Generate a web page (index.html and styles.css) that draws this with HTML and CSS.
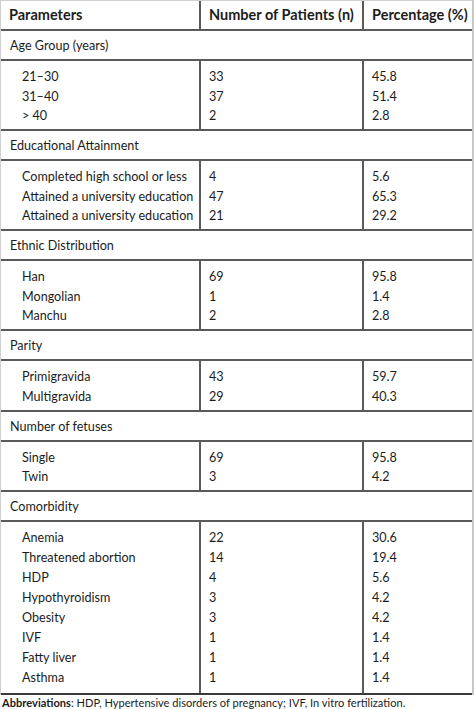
FILE: index.html
```html
<!DOCTYPE html>
<html>
<head>
<meta charset="utf-8">
<link rel="stylesheet" href="styles.css">
</head>
<body>
<div class="frame">
<table class="tbl">
  <colgroup><col class="c1"><col class="c2"><col class="c3"></colgroup>
  <thead>
    <tr><th>Parameters</th><th>Number of Patients (n)</th><th>Percentage (%)</th></tr>
  </thead>
  <tbody>
    <tr class="sec"><td colspan="3">Age Group (years)</td></tr>
    <tr class="first"><td class="lbl">21–30</td><td>33</td><td>45.8</td></tr>
    <tr><td class="lbl">31–40</td><td>37</td><td>51.4</td></tr>
    <tr class="last"><td class="lbl">&gt; 40</td><td>2</td><td>2.8</td></tr>
  </tbody>
  <tbody>
    <tr class="sec"><td colspan="3">Educational Attainment</td></tr>
    <tr class="first"><td class="lbl">Completed high school or less</td><td>4</td><td>5.6</td></tr>
    <tr><td class="lbl">Attained a university education</td><td>47</td><td>65.3</td></tr>
    <tr class="last"><td class="lbl">Attained a university education</td><td>21</td><td>29.2</td></tr>
  </tbody>
  <tbody>
    <tr class="sec"><td colspan="3">Ethnic Distribution</td></tr>
    <tr class="first"><td class="lbl">Han</td><td>69</td><td>95.8</td></tr>
    <tr><td class="lbl">Mongolian</td><td>1</td><td>1.4</td></tr>
    <tr class="last"><td class="lbl">Manchu</td><td>2</td><td>2.8</td></tr>
  </tbody>
  <tbody>
    <tr class="sec"><td colspan="3">Parity</td></tr>
    <tr class="first"><td class="lbl">Primigravida</td><td>43</td><td>59.7</td></tr>
    <tr class="last"><td class="lbl">Multigravida</td><td>29</td><td>40.3</td></tr>
  </tbody>
  <tbody>
    <tr class="sec"><td colspan="3">Number of fetuses</td></tr>
    <tr class="first"><td class="lbl">Single</td><td>69</td><td>95.8</td></tr>
    <tr class="last"><td class="lbl">Twin</td><td>3</td><td>4.2</td></tr>
  </tbody>
  <tbody class="loose">
    <tr class="sec"><td colspan="3">Comorbidity</td></tr>
    <tr class="first"><td class="lbl">Anemia</td><td>22</td><td>30.6</td></tr>
    <tr><td class="lbl">Threatened abortion</td><td>14</td><td>19.4</td></tr>
    <tr><td class="lbl">HDP</td><td>4</td><td>5.6</td></tr>
    <tr><td class="lbl">Hypothyroidism</td><td>3</td><td>4.2</td></tr>
    <tr><td class="lbl">Obesity</td><td>3</td><td>4.2</td></tr>
    <tr><td class="lbl">IVF</td><td>1</td><td>1.4</td></tr>
    <tr><td class="lbl">Fatty liver</td><td>1</td><td>1.4</td></tr>
    <tr class="last end"><td class="lbl">Asthma</td><td>1</td><td>1.4</td></tr>
  </tbody>
</table>
</div>
<p class="note"><b>Abbreviations</b>: HDP, Hypertensive disorders of pregnancy; IVF, In vitro fertilization.</p>
</body>
</html>
```
FILE: styles.css
```css
html, body {
  margin: 0;
  padding: 0;
  background: #fff;
}
body {
  width: 474px;
  height: 709px;
  overflow: hidden;
  font-family: "Lato", "Open Sans", sans-serif;
  color: #1c1c1c;
}
.frame {
  border-top: 1px solid #cfcfcf;
  border-left: 1px solid #cfcfcf;
  border-right: 2px solid #c8c8c8;
  width: 471px;
}
.tbl {
  width: 100%;
  border-collapse: collapse;
  table-layout: fixed;
  font-size: 12.6px;
}
.c1 { width: 199px; }
.c2 { width: 163px; }
.c3 { width: auto; }
.tbl th {
  text-align: left;
  font-weight: 700;
  font-size: 14.5px;
  line-height: 20px;
  padding: 4px 4px 4px 8px;
  white-space: nowrap;
  border-bottom: 2px solid #5a5a5a;
}
.tbl th + th {
  border-left: 2px solid #5a5a5a;
}
.tbl td {
  padding: 0 4px 0 8px;
  line-height: 19.5px;
  white-space: nowrap;
  vertical-align: middle;
}
.tbl td + td {
  border-left: 2px solid #5a5a5a;
}
.tbl td.lbl {
  padding-left: 21px;
}
.sec td {
  padding: 5px 4px 3.5px 9px;
  border-bottom: 2px solid #5a5a5a;
}
.first td { padding-top: 6px; }
.last td {
  padding-bottom: 3.5px;
  border-bottom: 2px solid #5a5a5a;
}
.loose tr:not(.sec) td {
  line-height: 20px;
}
.end td {
  padding-bottom: 5px;
  border-bottom: 2px solid #3a3a3a;
}
.note {
  margin: 1px 0 0 2px;
  font-size: 11.1px;
  line-height: 13px;
  white-space: nowrap;
  color: #1c1c1c;
}
.note b { font-weight: 700; }
```
